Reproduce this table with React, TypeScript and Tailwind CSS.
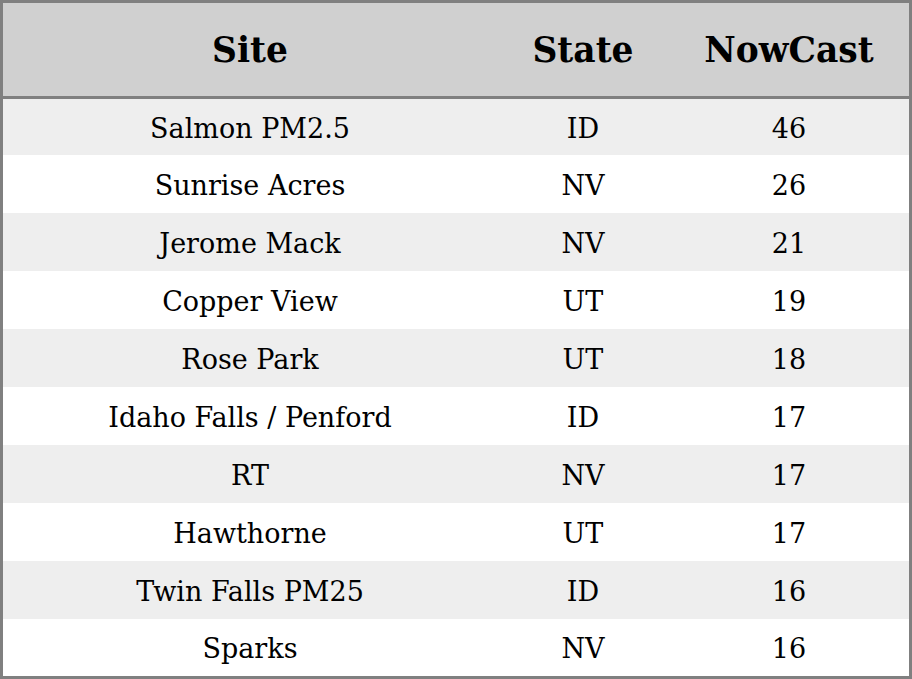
const rows = [
  { site: "Salmon PM2.5", state: "ID", nowcast: 46 },
  { site: "Sunrise Acres", state: "NV", nowcast: 26 },
  { site: "Jerome Mack", state: "NV", nowcast: 21 },
  { site: "Copper View", state: "UT", nowcast: 19 },
  { site: "Rose Park", state: "UT", nowcast: 18 },
  { site: "Idaho Falls / Penford", state: "ID", nowcast: 17 },
  { site: "RT", state: "NV", nowcast: 17 },
  { site: "Hawthorne", state: "UT", nowcast: 17 },
  { site: "Twin Falls PM25", state: "ID", nowcast: 16 },
  { site: "Sparks", state: "NV", nowcast: 16 },
];

export default function App() {
  return (
    <div className="w-[912px] h-[679px] border-[3px] border-[#808080] bg-white text-black font-['DejaVu_Serif',serif] flex flex-col">
      <div className="grid grid-cols-[494px_172px_1fr] h-[96px] shrink-0 bg-[#d0d0d0] border-b-[3px] border-[#808080] items-center text-[34.5px] font-bold pt-[2px]">
        <div className="text-center">Site</div>
        <div className="text-center">State</div>
        <div className="text-center">NowCast</div>
      </div>
      <div className="flex-1 flex flex-col">
        {rows.map((r, i) => {
          const h = i === 0 ? "h-[56px]" : i === rows.length - 1 ? "flex-1" : "h-[58px]";
          return (
            <div
              key={r.site}
              className={"shrink-0 grid grid-cols-[494px_172px_1fr] items-center text-[27px] pt-[4px] " + h + " " + (i % 2 === 0 ? "bg-[#eeeeee]" : "bg-white")}
            >
              <div className="text-center">{r.site}</div>
              <div className="text-center">{r.state}</div>
              <div className="text-center">{r.nowcast}</div>
            </div>
          );
        })}
      </div>
    </div>
  );
}
